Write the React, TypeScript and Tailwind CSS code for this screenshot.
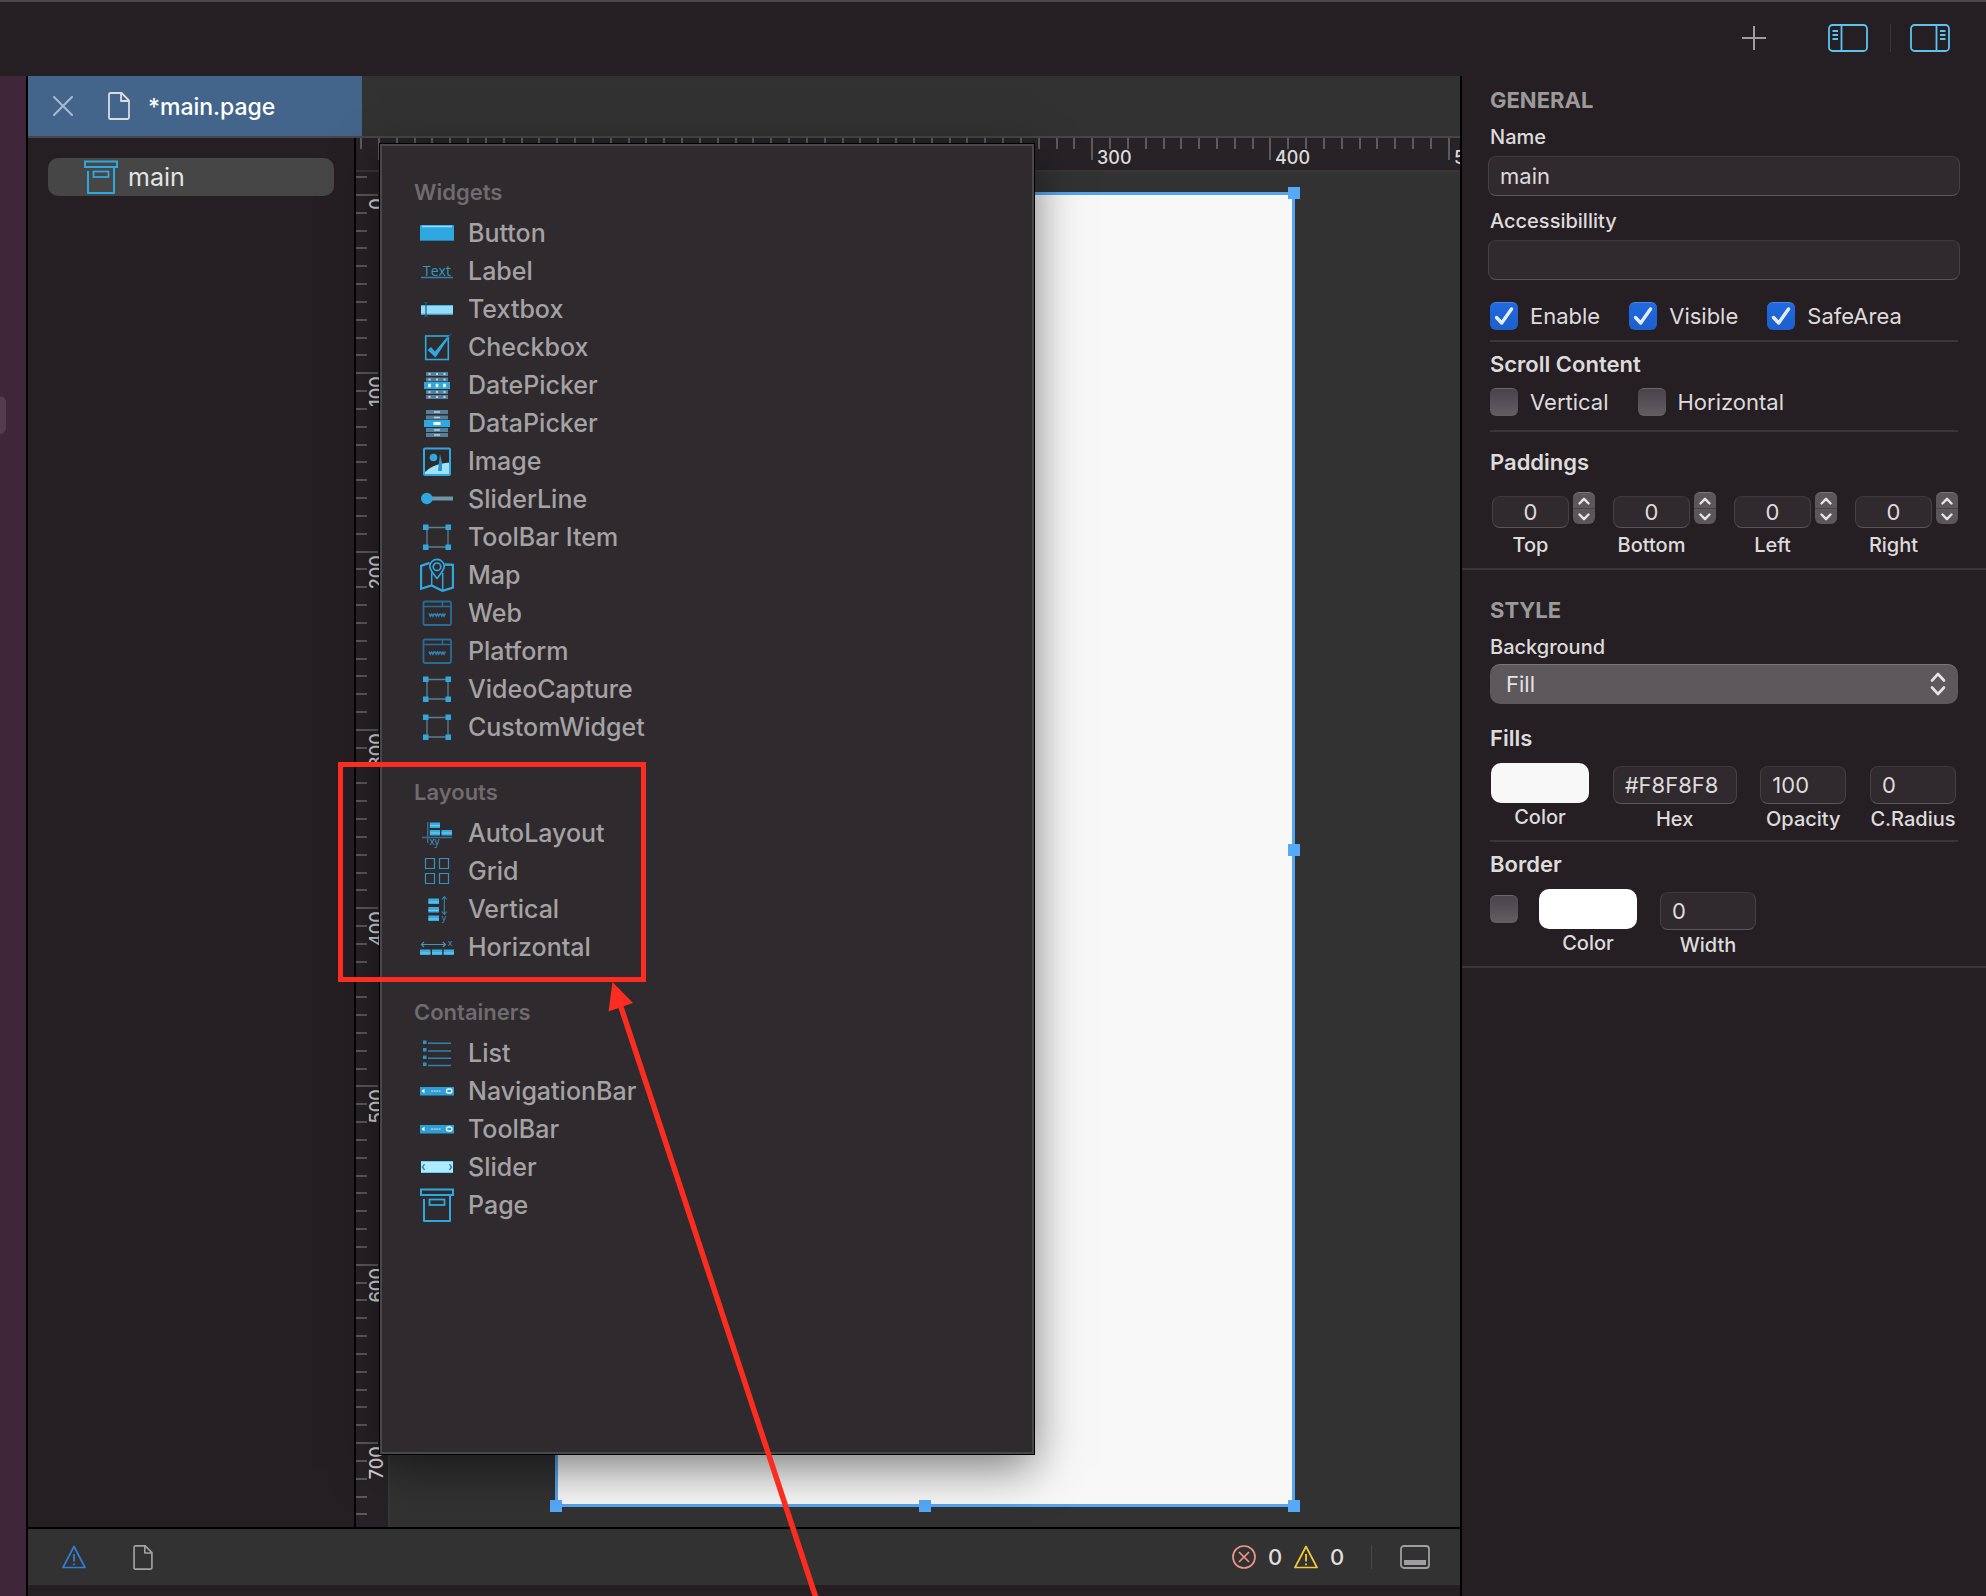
import React, { useLayoutEffect, useRef, useState } from "react";
import type { ReactNode } from "react";

const BLUE = "#2fa8e0";

function Svg({ children }: { children: ReactNode }) {
  return (
    <svg viewBox="0 0 34 34" className="size-[34px] shrink-0" fill="none" aria-hidden="true">
      {children}
    </svg>
  );
}

function ButtonIcon() {
  return (
    <Svg>
      <rect x="0" y="9" width="34" height="16" rx="1" fill={BLUE} />
      <path d="M2 10.5H32" stroke="#8fdcff" strokeWidth="1.5" />
      <path d="M0.5 24.5H33.5" stroke="#1d7fb5" />
    </Svg>
  );
}

function LabelIcon() {
  return (
    <Svg>
      <text x="17" y="22" textAnchor="middle" fontFamily="Open Sans, sans-serif" fontSize="14" fill="#3b96bd">
        Text
      </text>
      <path d="M1 23.5H33" stroke="#2f86ad" strokeWidth="1.5" />
    </Svg>
  );
}

function TextboxIcon() {
  return (
    <Svg>
      <rect x="1" y="13" width="32" height="9.5" fill="#93dcfb" />
      <path d="M1 13.5H33M1 22H33" stroke="#4bb4e2" />
      <path d="M4 10.5Q6 10.5 6 12.5V22.5Q6 24.5 4 24.5M8 10.5Q6 10.5 6 12.5M8 24.5Q6 24.5 6 22.5" stroke="#28586f" strokeWidth="1.2" />
    </Svg>
  );
}

function CheckboxIcon() {
  return (
    <Svg>
      <rect x="5.7" y="6" width="22.6" height="23.5" stroke={BLUE} strokeWidth="1.6" />
      <path d="M7.5 20L11 17L15 21.500L27.500 6.500L28 9L15.500 27.500Z" fill={BLUE} />
      <path d="M27.5 7.5L31.5 4" stroke="#2b6685" />
    </Svg>
  );
}

function PickerIcon({ date }: { date?: boolean }) {
  const ys = [4, 9.5, 22, 27];
  return (
    <Svg>
      {ys.map((y) => (
        <g key={y}>
          <rect x="6" y={y} width="22" height="4" fill="#547f9c" />
          {date ? (
            <path d={`M8.5 ${y + 2}h2M16 ${y + 2}h2M23.5 ${y + 2}h2`} stroke="#b9d3e2" strokeWidth="2" />
          ) : (
            <path d={`M14 ${y + 2}h6`} stroke="#b9cbd6" strokeWidth="1.6" />
          )}
        </g>
      ))}
      <rect x="4" y="14" width="26" height="7" fill={BLUE} />
      {date ? (
        <path d="M8.2 17.5h2.6M15.7 17.5h2.6M23.2 17.5h2.6" stroke="#fff" strokeWidth="3.4" />
      ) : (
        <path d="M13.5 17.5h7" stroke="#fff" strokeWidth="3" />
      )}
    </Svg>
  );
}

function ImageIcon() {
  return (
    <Svg>
      <path d="M4 29C9 24 17 19 30 18.5V31H4Z" fill="#9fe2fb" />
      <path d="M20 10L22 18.5V27H18L19 18Z" fill="#2b93c7" />
      <circle cx="13.5" cy="13.5" r="3.8" fill={BLUE} />
      <rect x="4" y="4.5" width="26" height="26.5" rx="1" stroke={BLUE} strokeWidth="2" />
    </Svg>
  );
}

function SliderLineIcon() {
  return (
    <Svg>
      <path d="M7 16.5H33" stroke="#6d97aa" strokeWidth="4" />
      <circle cx="6.8" cy="16.5" r="5.8" fill={BLUE} />
    </Svg>
  );
}

function FrameIcon() {
  return (
    <Svg>
      <path d="M7 7.5H28V27H7Z" stroke="#5b7f90" strokeWidth="1.3" />
      <path d="M3 4.5h5.5V10H3ZM25.5 4.5H31V10h-5.5ZM3 24.5h5.5V30H3ZM25.5 24.5H31V30h-5.5Z" fill={BLUE} />
    </Svg>
  );
}

function MapIcon() {
  return (
    <Svg>
      <path d="M9.5 4.8L1 7.8V30.8L11.5 27.5L22.5 32.8L33 29.5V6.8L24.8 6.5" stroke={BLUE} strokeWidth="2.3" />
      <path d="M11.7 14.5V27.5M22.7 15V32" stroke={BLUE} strokeWidth="1.5" />
      <path d="M17 20.5C13 15.5 9.8 12 9.8 8.6A7.2 7.2 0 0 1 24.2 8.6C24.2 12 21 15.5 17 20.5Z" stroke={BLUE} strokeWidth="1.7" />
      <circle cx="17" cy="8.8" r="3.8" stroke={BLUE} strokeWidth="1.7" />
    </Svg>
  );
}

function WebIcon() {
  return (
    <Svg>
      <rect x="3.5" y="5.5" width="27.5" height="23.5" rx="1.5" stroke="#2a6c98" strokeWidth="1.8" />
      <path d="M3.5 10.5H31M22.5 5.5V10" stroke="#2a6c98" strokeWidth="1.6" />
      <path
        d="M9 17.5l1.4 2.6l1.3-2l1.3 2l1.4-2.600M14.900 17.500l1.300 2.600l1.200-2l1.200 2l1.300-2.600M20.400 17.500l1.300 2.600l1.200-2l1.200 2l1.300-2.600"
        stroke="#2f80b4"
        strokeWidth="1.600"
      />
    </Svg>
  );
}

function AutoLayoutIcon() {
  return (
    <Svg>
      <path d="M7.7 6V27M2 21.5H32" stroke="#38708c" strokeWidth="1.4" />
      <path d="M9.8 6.5H20V12H9.8ZM9.8 14H20V19.5H9.8ZM21.5 14H32V19.5H21.5Z" fill="#36ace3" />
      <path d="M10 9.5H20M10 17H20M21.5 17H32" stroke="#8bd4f5" strokeWidth="0.8" />
      <text x="14.5" y="29" textAnchor="middle" fontFamily="Open Sans, sans-serif" fontSize="10" fill="#3a9ccc">
        xy
      </text>
    </Svg>
  );
}

function GridIcon() {
  return (
    <Svg>
      <path d="M5.5 4.5h9V14.5h-9ZM19.5 4.5h9V14.5h-9ZM5.5 19.5h9V29.5h-9ZM19.5 19.5h9V29.5h-9Z" stroke="#3192c4" strokeWidth="1.2" />
    </Svg>
  );
}

function VerticalIcon() {
  return (
    <Svg>
      <path d="M8.3 6.500H19V12H8.300ZM8.300 15H19V20.500H8.300ZM8.300 23.500H19V29H8.300Z" fill="#36ace3" />
      <path d="M8.3 10H19M8.3 18.5H19M8.3 27H19" stroke="#8bd4f5" strokeWidth="0.8" />
      <path d="M24.3 5V22M21.8 7.5L24.3 4.5L26.8 7.5M21.8 19.5L24.3 22.5L26.8 19.5" stroke="#3a86a8" strokeWidth="1.1" />
      <text x="24" y="29" textAnchor="middle" fontFamily="Open Sans, sans-serif" fontSize="9" fill="#3a9ccc">
        y
      </text>
    </Svg>
  );
}

function HorizontalIcon() {
  return (
    <Svg>
      <path d="M0 19.5H10.5V25H0ZM12 19.5H22.2V25H12ZM23.7 19.5H34V25H23.7Z" fill="#36ace3" />
      <path d="M0 23H10.5M12 23H22.2M23.7 23H34" stroke="#8bd4f5" strokeWidth="0.8" />
      <path d="M1.5 14.5H25M4 12L1.5 14.5L4 17M22.8 12L25.5 14.5L22.8 17" stroke="#4a94b4" strokeWidth="1.1" />
      <text x="30" y="16" textAnchor="middle" fontFamily="Open Sans, sans-serif" fontSize="9" fill="#3a9ccc">
        x
      </text>
    </Svg>
  );
}

function ListIcon() {
  return (
    <Svg>
      <path d="M3 4.5h3.500V8H3ZM3 12h3.500v3.500H3ZM3 19.500h3.500V23H3ZM3 26.500h3.500V30H3Z" fill="#2f93c6" />
      <path d="M8 7.3H31M8 15H31M8 22.3H31M8 29.5H31" stroke="#3083ad" strokeWidth="1.4" />
    </Svg>
  );
}

function BarIcon() {
  return (
    <Svg>
      <rect x="0" y="13" width="34" height="8.5" fill="#2e9fd6" />
      <path d="M1.5 17L4.5 14.8V19.2Z" fill="#fff" />
      <path d="M11 17.2H20.5" stroke="#8cc9e8" strokeWidth="1.8" strokeDasharray="2 0.6" />
      <rect x="26.5" y="15" width="5.5" height="4" rx="2" stroke="#e8f6fd" strokeWidth="1.3" />
    </Svg>
  );
}

function SliderIcon() {
  return (
    <Svg>
      <rect x="1" y="11" width="32" height="12" fill="#aeebff" />
      <path d="M1 11.5H33M1 22.5H33" stroke="#6ecdf2" />
      <path d="M4.5 14.2L2.5 17L4.5 20M29.5 14.2L31.5 17L29.5 20" stroke="#1f86bd" strokeWidth="1.4" />
    </Svg>
  );
}

function PageIcon() {
  return (
    <Svg>
      <rect x="1" y="1.5" width="32" height="5.5" stroke={BLUE} strokeWidth="2" />
      <path d="M4 11V33H30V8" stroke={BLUE} strokeWidth="2" strokeLinejoin="round" />
      <rect x="9.5" y="11.5" width="15" height="5.5" stroke={BLUE} strokeWidth="1.8" />
    </Svg>
  );
}

function DocIcon({ className }: { className: string }) {
  return (
    <svg viewBox="0 0 22 28" className={className} fill="none" stroke="currentColor" strokeWidth="1.8" aria-hidden="true">
      <path d="M3 1H13.5L21 8.5V25.5Q21 27 19.5 27H2.5Q1 27 1 25.5V2.5Q1 1 2.5 1ZM13 1V9H21" strokeLinejoin="round" />
    </svg>
  );
}

function WarnIcon({ className }: { className: string }) {
  return (
    <svg viewBox="0 0 24 24" className={className} fill="none" stroke="currentColor" aria-hidden="true">
      <path d="M12 1.5L23 22.5H1Z" strokeWidth="1.7" strokeLinejoin="round" />
      <path d="M12 9V16.5M12 18.5V20.3" strokeWidth="1.8" />
    </svg>
  );
}

const sections: { title: string; items: [string, ReactNode][] }[] = [
  {
    title: "Widgets",
    items: [
      ["Button", <ButtonIcon />],
      ["Label", <LabelIcon />],
      ["Textbox", <TextboxIcon />],
      ["Checkbox", <CheckboxIcon />],
      ["DatePicker", <PickerIcon date />],
      ["DataPicker", <PickerIcon />],
      ["Image", <ImageIcon />],
      ["SliderLine", <SliderLineIcon />],
      ["ToolBar Item", <FrameIcon />],
      ["Map", <MapIcon />],
      ["Web", <WebIcon />],
      ["Platform", <WebIcon />],
      ["VideoCapture", <FrameIcon />],
      ["CustomWidget", <FrameIcon />],
    ],
  },
  {
    title: "Layouts",
    items: [
      ["AutoLayout", <AutoLayoutIcon />],
      ["Grid", <GridIcon />],
      ["Vertical", <VerticalIcon />],
      ["Horizontal", <HorizontalIcon />],
    ],
  },
  {
    title: "Containers",
    items: [
      ["List", <ListIcon />],
      ["NavigationBar", <BarIcon />],
      ["ToolBar", <BarIcon />],
      ["Slider", <SliderIcon />],
      ["Page", <PageIcon />],
    ],
  },
];

function Palette() {
  return (
    <div className="absolute top-1.5 bottom-[73px] left-6 w-[654px] border-2 border-[#4a474a] bg-[#2f2a2e] shadow-[0_0_0_1px_#000,0_14px_44px_rgba(0,0,0,0.5)]">
      {sections.map((s) => (
        <section key={s.title} className="pt-[26px]">
          <h3 className="flex h-[42px] items-center pb-0.5 pl-8 text-[22px] font-semibold text-[#6f6b6e]">{s.title}</h3>
          <ul>
            {s.items.map(([name, icon]) => (
              <li key={name}>
                <button type="button" className="flex h-[38px] w-full items-center gap-3.5 pl-[38px] text-left text-[25px] font-medium text-[#a5a2a4]">
                  {icon}
                  <span className="pt-0.5">{name}</span>
                </button>
              </li>
            ))}
          </ul>
        </section>
      ))}
    </div>
  );
}

const ORIGIN = 23;
const STEP = 17.83;

function Ruler({ vertical }: { vertical?: boolean }) {
  const ref = useRef<SVGSVGElement>(null);
  const [length, setLength] = useState(0);

  useLayoutEffect(() => {
    const el = ref.current;
    if (!el) return;
    const measure = () => {
      const box = el.getBoundingClientRect();
      setLength(vertical ? box.height : box.width);
    };
    measure();
    const observer = new ResizeObserver(measure);
    observer.observe(el);
    return () => observer.disconnect();
  }, [vertical]);

  const count = Math.max(0, Math.ceil((length - ORIGIN) / STEP)) + 1;
  const ticks = Array.from({ length: count }, (_, i) => i - 1);
  return (
    <svg ref={ref} className="absolute top-0 left-0 h-full w-full text-[18px] font-medium" fill="#dddadd" aria-hidden="true">
      {ticks.map((k) => {
        const p = Math.round(ORIGIN + k * STEP);
        const major = k % 10 === 0;
        const value = (vertical ? k : k - 10) * 10;
        const len = major ? 22 : 11;
        return (
          <g key={k}>
            {vertical ? (
              <rect x="0" y={p - 1} width={len} height="2" fill="#5d595c" />
            ) : (
              <rect x={p - 1} y="0" width="2" height={len} fill="#5d595c" />
            )}
            {major &&
              (vertical ? (
                <text transform={`translate(27 ${p + 3}) rotate(-90)`} textAnchor="end">
                  {value}
                </text>
              ) : (
                <text x={p + 5} y="26">
                  {value}
                </text>
              ))}
          </g>
        );
      })}
    </svg>
  );
}

function Canvas() {
  return (
    <div className="relative flex min-w-0 flex-1 flex-col bg-[#323232]">
      <div className="relative h-[34px] overflow-hidden border-b-2 border-[#3a3638] bg-[#272226]">
        <Ruler />
      </div>
      <div className="flex flex-1">
        <div className="relative w-[34px] overflow-hidden border-r-2 border-[#3a3638] bg-[#272226]">
          <Ruler vertical />
        </div>
        <div className="flex flex-1 px-[165px] py-5">
          <div className="relative flex-1 border-[3px] border-[#56a5ee] bg-[#f8f8f8]">
            <i className="absolute -top-2 -right-2 size-3 bg-[#55a9f7]" />
            <i className="absolute top-1/2 -right-2 size-3 -translate-y-1/2 bg-[#55a9f7]" />
            <i className="absolute -right-2 -bottom-2 size-3 bg-[#55a9f7]" />
            <i className="absolute -bottom-2 left-1/2 size-3 -translate-x-1/2 bg-[#55a9f7]" />
            <i className="absolute -bottom-2 -left-2 size-3 bg-[#55a9f7]" />
          </div>
        </div>
      </div>
      <Palette />
    </div>
  );
}

function Check({ label, checked }: { label?: string; checked?: boolean }) {
  return (
    <label className="flex h-7 items-center gap-3 text-[22px] leading-7 text-[#dedbdd]">
      <span className="grid size-7 shrink-0 *:col-start-1 *:row-start-1">
        <input
          type="checkbox"
          defaultChecked={checked}
          aria-label={label ?? "Border"}
          className="peer size-7 appearance-none rounded-md border-t border-[#6b676a] bg-linear-to-b from-[#48444a] to-[#625e62] checked:border-[#4a86ea] checked:from-[#2069e0] checked:to-[#1d5fcb]"
        />
        <svg viewBox="0 0 28 28" className="pointer-events-none hidden size-7 peer-checked:block" fill="none" aria-hidden="true">
          <path d="M6.5 15.5L11.7 21L21.5 7" stroke="#e4edfc" strokeWidth="3.4" strokeLinecap="round" strokeLinejoin="round" />
        </svg>
      </span>
      {label}
    </label>
  );
}

const field =
  "min-w-0 rounded-lg border border-t-[#3d383c] border-x-[#444044] border-b-[#5a565a] bg-[#302a2e] text-[22px] font-normal text-[#dedbdd] outline-none";

function Padding({ label }: { label: string }) {
  return (
    <div className="flex w-[103px] items-start justify-between">
      <label className="flex w-[77px] flex-col items-center text-[20px] font-medium text-[#dedbdd]">
        <input defaultValue="0" className={`${field} mt-1 h-8 w-full text-center`} />
        <span className="mt-[3px] h-7 leading-7">{label}</span>
      </label>
      <span className="flex h-8 w-[22px] flex-col overflow-hidden rounded-md border-t border-[#7a767a] bg-[#5a565a] text-[#e6e3e5]">
        <button type="button" aria-label={`Increase ${label}`} className="flex flex-1 items-center justify-center border-b border-[#474347]">
          <svg viewBox="0 0 12 8" className="h-2 w-3" fill="none" stroke="currentColor" strokeWidth="2.4" strokeLinecap="round" strokeLinejoin="round">
            <path d="M1.5 6.5L6 1.8L10.5 6.5" />
          </svg>
        </button>
        <button type="button" aria-label={`Decrease ${label}`} className="flex flex-1 items-center justify-center">
          <svg viewBox="0 0 12 8" className="h-2 w-3" fill="none" stroke="currentColor" strokeWidth="2.4" strokeLinecap="round" strokeLinejoin="round">
            <path d="M1.5 1.5L6 6.2L10.5 1.5" />
          </svg>
        </button>
      </span>
    </div>
  );
}

function Swatch({ color }: { color: string }) {
  return (
    <div className="flex w-[98px] flex-col items-center">
      <button type="button" aria-label="Pick color" className="h-10 w-full rounded-[10px]" style={{ backgroundColor: color }} />
      <span className="h-7 text-[20px] leading-7 font-medium text-[#dedbdd]">Color</span>
    </div>
  );
}

function Field({ label, value, width }: { label: string; value: string; width: string }) {
  return (
    <label className={`flex flex-col items-center pt-[3px] text-[20px] font-medium text-[#dedbdd] ${width}`}>
      <input defaultValue={value} className={`${field} h-[38px] w-full px-[11px]`} />
      <span className="mt-px h-7 leading-7 whitespace-nowrap">{label}</span>
    </label>
  );
}

const heading = "h-7 text-[22px] leading-7 font-bold text-[#9c999b]";
const subheading = "h-7 text-[22px] leading-7 font-semibold text-[#dedbdd]";
const small = "h-7 text-[20px] leading-7 font-medium text-[#dedbdd]";

function Inspector() {
  return (
    <aside className="w-[526px] shrink-0 border-l-2 border-black">
      <section className="border-b-2 border-[#3a3539] px-7 pt-2.5 pb-[9px]">
        <h2 className={heading}>GENERAL</h2>
        <label htmlFor="name" className={`${small} mt-[9px] block`}>
          Name
        </label>
        <div className="-mx-0.5 mt-[5px] flex">
          <input id="name" defaultValue="main" className={`${field} h-10 flex-1 px-[11px]`} />
        </div>
        <label htmlFor="accessibility" className={`${small} mt-[11px] block`}>
          Accessibillity
        </label>
        <div className="-mx-0.5 mt-[5px] flex">
          <input id="accessibility" className={`${field} h-10 flex-1 px-[11px]`} />
        </div>
        <div className="mt-[22px] flex gap-[29px] border-b-2 border-[#3a3539] pb-2.5">
          <Check label="Enable" checked />
          <Check label="Visible" checked />
          <Check label="SafeArea" checked />
        </div>
        <h3 className={`${subheading} mt-2`}>Scroll Content</h3>
        <div className="mt-2.5 flex gap-[29px] border-b-2 border-[#3a3539] pb-3.5">
          <Check label="Vertical" />
          <Check label="Horizontal" />
        </div>
        <h3 className={`${subheading} mt-4`}>Paddings</h3>
        <div className="mt-4 flex justify-between pl-0.5">
          <Padding label="Top" />
          <Padding label="Bottom" />
          <Padding label="Left" />
          <Padding label="Right" />
        </div>
      </section>

      <section className="border-b-2 border-[#3a3539] px-7 pt-[26px] pb-[7px]">
        <h2 className={heading}>STYLE</h2>
        <label htmlFor="background" className={`${small} mt-[9px] block`}>
          Background
        </label>
        <div className="mt-[3px] grid items-center *:col-start-1 *:row-start-1">
          <select
            id="background"
            className="h-10 w-full appearance-none rounded-[10px] border-t border-[#7a767a] bg-[#5c585b] px-4 text-[22px] text-[#e6e3e5] outline-none"
          >
            <option>Fill</option>
          </select>
          <svg
            viewBox="0 0 16 24"
            className="pointer-events-none mr-3 h-6 w-4 justify-self-end"
            fill="none"
            stroke="#e6e3e5"
            strokeWidth="2.6"
            strokeLinecap="round"
            strokeLinejoin="round"
            aria-hidden="true"
          >
            <path d="M2 8.5L8 2L14 8.5M2 15.5L8 22L14 15.5" />
          </svg>
        </div>
        <h3 className={`${subheading} mt-5`}>Fills</h3>
        <div className="mt-[11px] flex justify-between border-b-2 border-[#3a3539] pr-0.5 pb-[7px] pl-px">
          <Swatch color="#F8F8F8" />
          <Field label="Hex" value="#F8F8F8" width="w-[124px]" />
          <Field label="Opacity" value="100" width="w-[86px]" />
          <Field label="C.Radius" value="0" width="w-[86px]" />
        </div>
        <h3 className={`${subheading} mt-2`}>Border</h3>
        <div className="mt-[11px] flex items-start">
          <div className="mt-1.5 mr-[21px]">
            <Check />
          </div>
          <Swatch color="#FFFFFF" />
          <div className="ml-[23px]">
            <Field label="Width" value="0" width="w-[96px]" />
          </div>
        </div>
      </section>
    </aside>
  );
}

function PanelToggle({ side }: { side: "left" | "right" }) {
  return (
    <button type="button" aria-label={`Toggle ${side} panel`} className="text-[#5cc3f0]">
      <svg viewBox="0 0 40 28" className="h-7 w-10" fill="none" stroke="currentColor" strokeWidth="1.8">
        <rect x="1" y="1" width="38" height="26" rx="3.5" />
        {side === "left" ? (
          <path d="M13.5 1V27M4.5 7H10M4.5 11H10M4.5 15H10" />
        ) : (
          <path d="M26.5 1V27M30 7H35.5M30 11H35.5M30 15H35.5" />
        )}
      </svg>
    </button>
  );
}

function Annotation() {
  return (
    <>
      <div className="pointer-events-none absolute top-[762px] left-[338px] h-[220px] w-[308px] border-[5px] border-[#fb2c20]" />
      <svg
        className="pointer-events-none absolute top-[982px] left-[600px] h-[614px] w-[230px]"
        viewBox="0 0 230 614"
        fill="none"
        aria-hidden="true"
      >
        <path d="M20 22L216 616" stroke="#fb2c20" strokeWidth="5.5" />
        <path d="M12.5 0L33 21L8.5 29.5Z" fill="#fb2c20" />
      </svg>
    </>
  );
}

export default function App() {
  return (
    <div className="relative flex min-h-screen flex-col overflow-hidden bg-[#251f23] font-['Inter',sans-serif]">
      <header className="flex h-[76px] items-center justify-end border-t-2 border-[#4a474b] pr-9 pb-0.5">
        <button type="button" aria-label="Add" className="mr-[62px] text-[#a09da0]">
          <svg viewBox="0 0 24 24" className="size-6" stroke="currentColor" strokeWidth="2">
            <path d="M12 0V24M0 12H24" />
          </svg>
        </button>
        <PanelToggle side="left" />
        <span className="mr-[19px] ml-[22px] h-7 w-px bg-[#3a363a]" />
        <PanelToggle side="right" />
      </header>

      <div className="flex flex-1">
        <div className="w-7 shrink-0 border-r-2 border-black bg-[#3f2638] pt-[320px]">
          <div className="h-[38px] w-1.5 rounded-r-md bg-[#553a50]" />
        </div>

        <main className="flex min-w-0 flex-1 flex-col">
          <div className="flex h-[62px] border-b-2 border-[#464646] bg-[#323232]">
            <div className="flex w-[334px] items-center bg-[#43658b]">
              <button type="button" aria-label="Close tab" className="ml-[25px] text-[#a9bacd]">
                <svg viewBox="0 0 20 20" className="size-5" stroke="currentColor" strokeWidth="2" strokeLinecap="round">
                  <path d="M1 1L19 19M19 1L1 19" />
                </svg>
              </button>
              <DocIcon className="ml-[35px] h-7 w-[22px] text-[#dcdcdc]" />
              <span className="ml-[18px] pt-0.5 text-[23px] font-medium text-white">*main.page</span>
            </div>
          </div>

          <div className="flex flex-1">
            <nav className="w-[328px] shrink-0 border-r-2 border-black px-5 pt-5">
              <button
                type="button"
                className="flex h-[38px] w-full items-center gap-2.5 rounded-[10px] bg-[#464646] pl-9 text-[25px] text-[#e4e4e4]"
              >
                <PageIcon />
                <span className="pt-0.5">main</span>
              </button>
            </nav>
            <Canvas />
          </div>

          <footer className="mb-[11px] flex h-[58px] items-center border-t-2 border-black bg-[#323232] pr-[30px] pl-[34px] text-[22px] font-medium text-[#e0dddf]">
            <button type="button" aria-label="Issues" className="text-[#2f7fd6]">
              <WarnIcon className="size-6" />
            </button>
            <button type="button" aria-label="Document" className="ml-[47px] text-[#a3a3a3]">
              <DocIcon className="h-[25px] w-5" />
            </button>
            <svg viewBox="0 0 24 24" className="ml-auto size-6 text-[#f0958a]" fill="none" stroke="currentColor" strokeWidth="1.7" aria-hidden="true">
              <circle cx="12" cy="12" r="11" />
              <path d="M7 7L17 17M17 7L7 17" />
            </svg>
            <span className="w-[38px] text-center">0</span>
            <WarnIcon className="size-6 text-[#f4ca3a]" />
            <span className="w-[38px] text-center">0</span>
            <span className="mr-7 ml-[15px] h-6 w-px bg-[#4a4a4a]" />
            <button type="button" aria-label="Toggle bottom panel" className="text-[#a09ea1]">
              <svg viewBox="0 0 30 24" className="h-6 w-[30px]" fill="none" stroke="currentColor" strokeWidth="1.8">
                <rect x="1" y="1" width="28" height="22" rx="3" />
                <path d="M4 15H26V20H4Z" fill="currentColor" stroke="none" />
              </svg>
            </button>
          </footer>
        </main>

        <Inspector />
      </div>

      <Annotation />
    </div>
  );
}
